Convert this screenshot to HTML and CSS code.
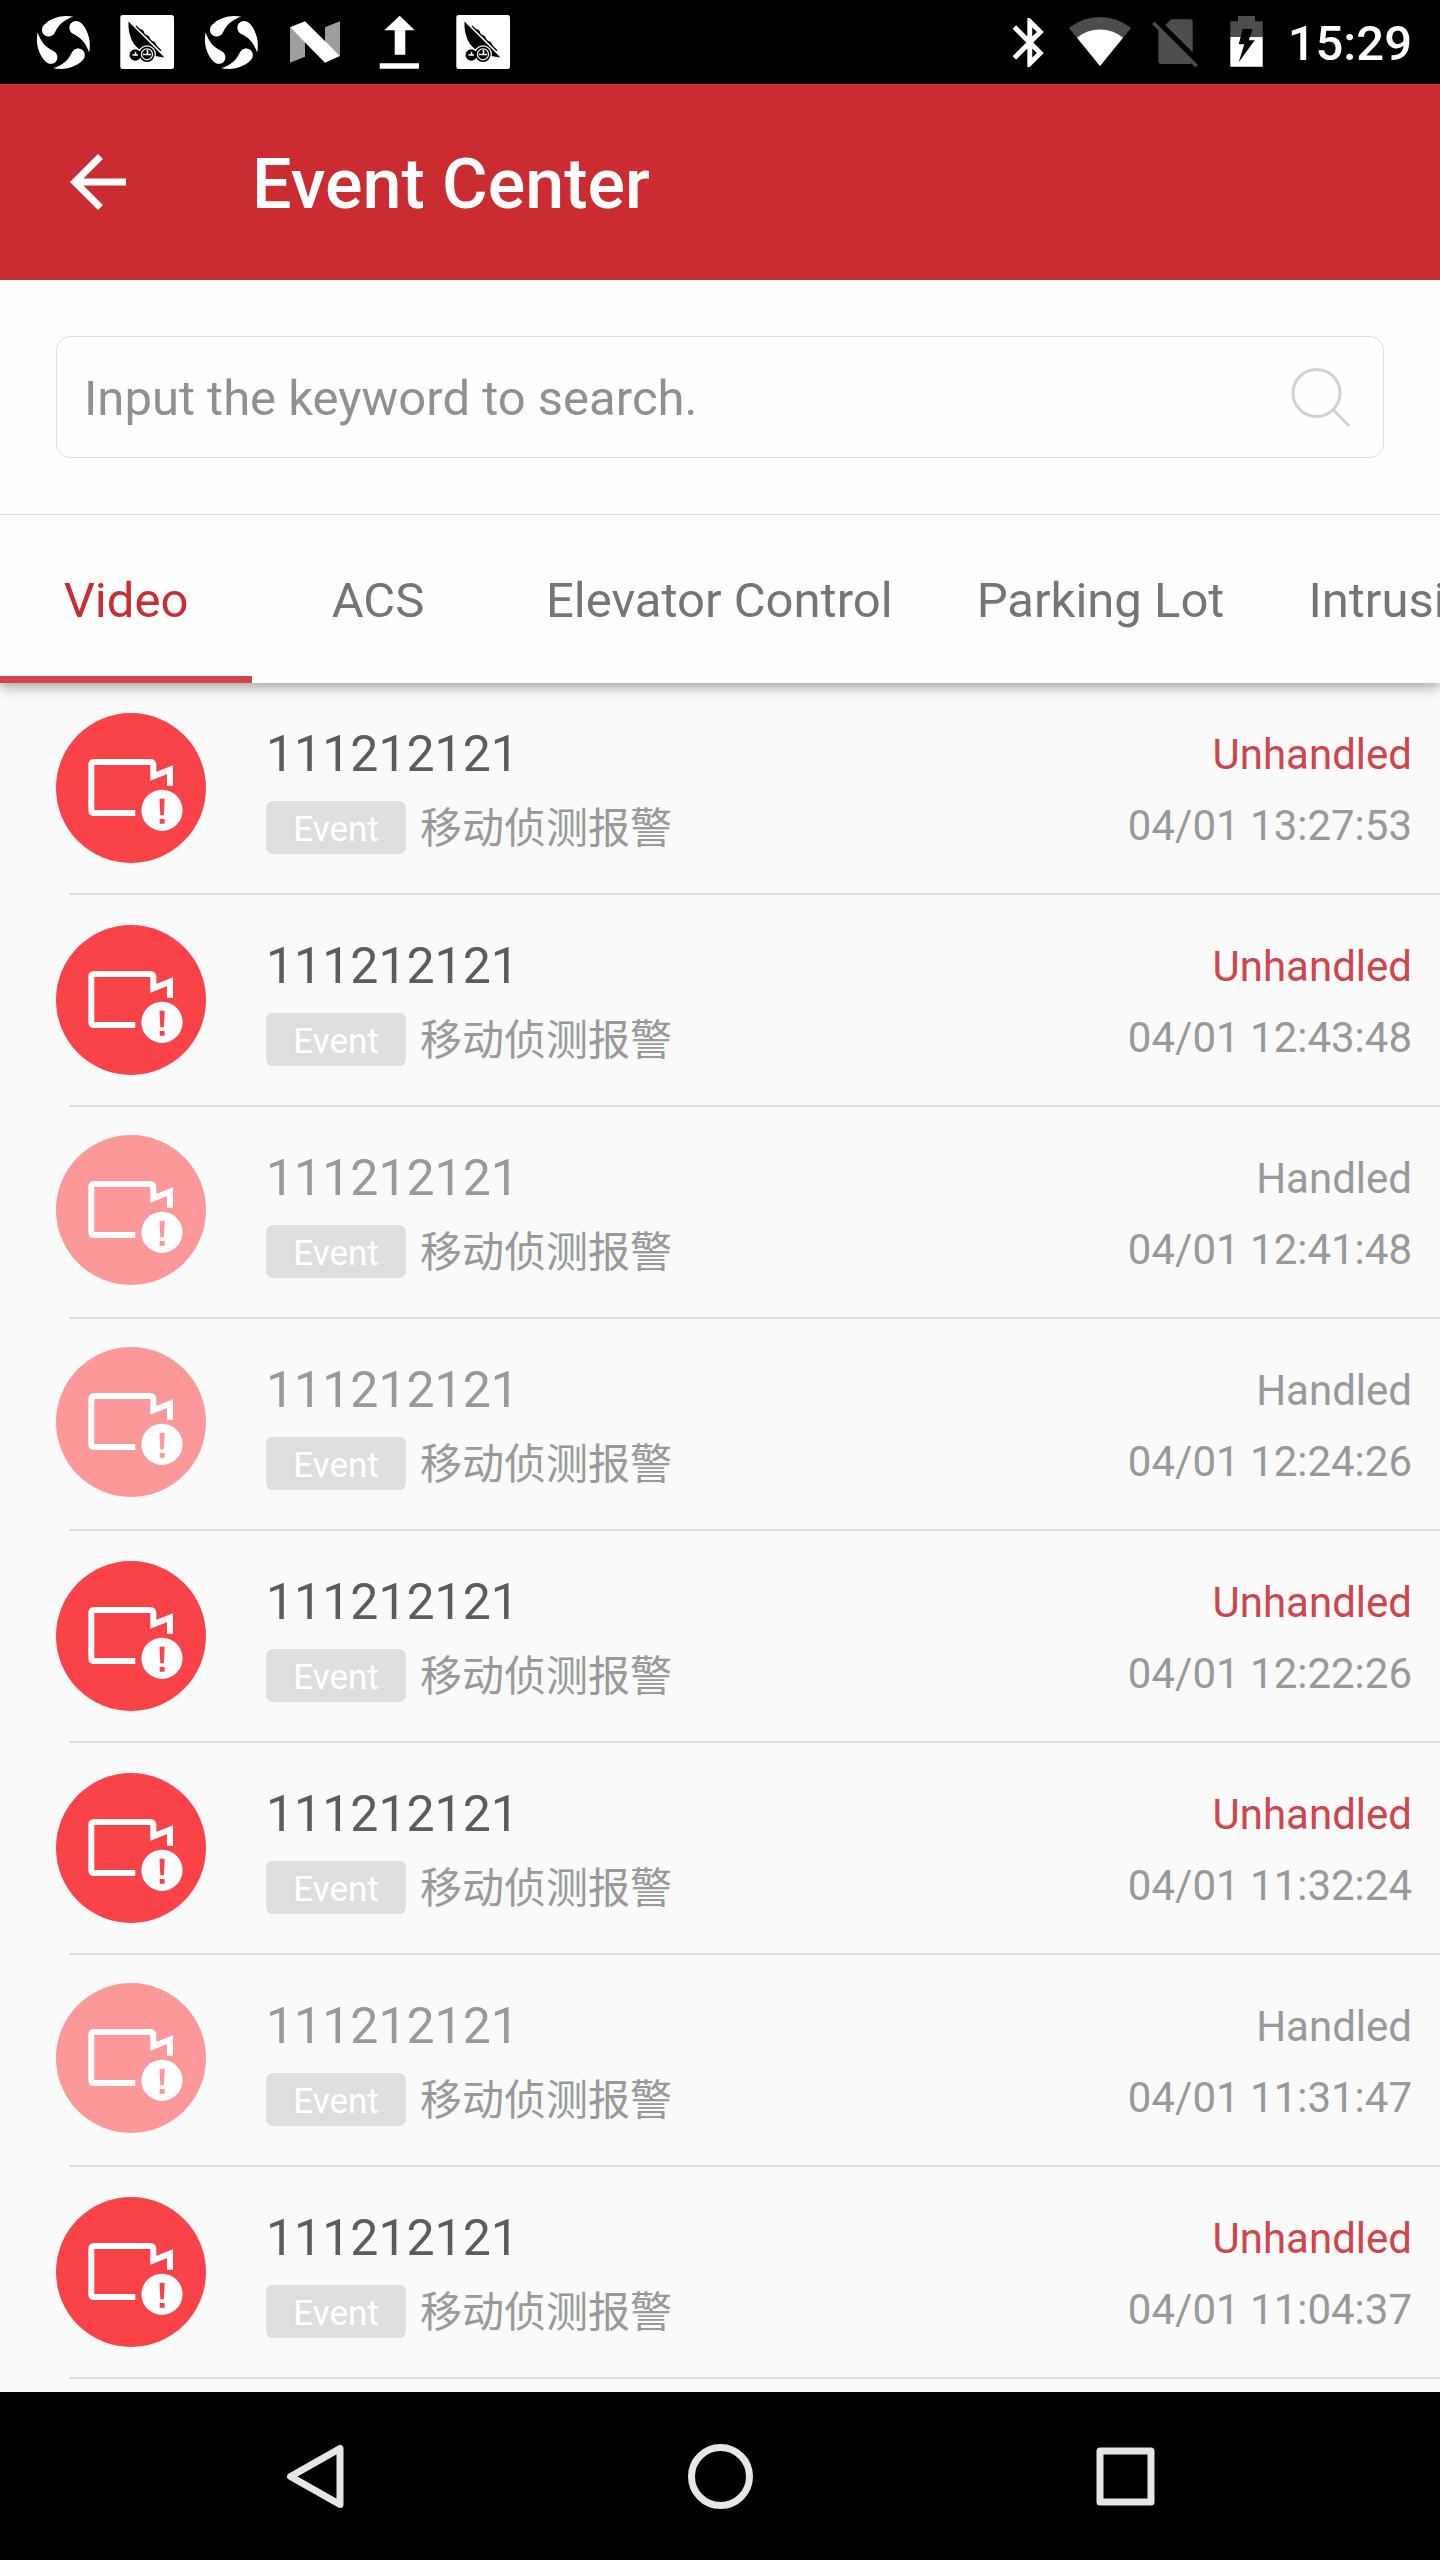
FILE: index.html
```html
<!DOCTYPE html>
<html lang="en">
<head>
<meta charset="utf-8">
<meta name="viewport" content="width=device-width, initial-scale=1">
<title>Event Center</title>
<link rel="stylesheet" href="styles.css">
</head>
<body>
<svg class="sprite" aria-hidden="true">
  <symbol id="swirl" viewBox="0 0 84 84">
    <g fill="#fff" transform="translate(42.4 42.4)">
      <path id="petal" d="M10-25.8C3-27.2-5-26.5-12-23C-16-21-19-18.500-20.800-15.500C-23-10-19-6-15-6C-11-6-9-8.500-8-11C-4-18-1-21.500 10-25.800Z"/>
      <use href="#petal" transform="rotate(90)"/>
      <use href="#petal" transform="rotate(180)"/>
      <use href="#petal" transform="rotate(270)"/>
    </g>
  </symbol>
  <symbol id="sail" viewBox="0 0 84 84">
    <rect x="15.300" y="15" width="53.700" height="54" rx="2.500" fill="#fff"/>
    <path d="M23.500 21.500C23 32 26 43 34 49L42 47L50 56L59.500 57.500C55 53 50 48 48 46L28 26Z"/>
    <path d="M31 26L56 50.700" stroke="#000" stroke-width="1.300"/>
    <path d="M34.500 29.500q4-1 5 4.500zM40.500 35.500q4-1 5 4.500zM46.500 41.500q4-1 5 4.500z"/>
    <circle cx="42" cy="54.300" r="9" fill="#fff"/>
    <circle cx="30.300" cy="55" r="5.800"/>
    <circle cx="42" cy="54.300" r="7.700"/>
    <circle cx="42" cy="54.300" r="5.500" fill="none" stroke="#fff" stroke-width="1.200"/>
    <path d="M38 54.500h8M42.500 50v4M27.500 55h5.500M30.500 52v3" stroke="#fff" stroke-width="1.600"/>
  </symbol>
  <symbol id="camera" viewBox="0 0 150 150">
    <circle cx="75" cy="75" r="75" fill="currentColor"/>
    <path d="M79.300 100H38.500Q35.300 100 35.300 97V52Q35.300 49 38.500 49H94Q97.300 49 97.300 52V63.300L114 56.700V72.700" fill="none" stroke="#fff" stroke-width="6"/>
    <circle cx="106" cy="97.300" r="20.600" fill="#fff"/>
    <path d="M103.500 85.700h5.200l-.8 16.600h-3.600zM103.700 106h5v4.700h-5z" fill="currentColor"/>
  </symbol>
</svg>

<div class="screen">
  <div class="status-bar">
    <div class="status-group">
      <svg width="84" height="84" aria-hidden="true"><use href="#swirl"/></svg>
      <svg width="84" height="84" aria-hidden="true"><use href="#sail"/></svg>
      <svg width="84" height="84" aria-hidden="true"><use href="#swirl"/></svg>
      <svg width="84" height="84" viewBox="0 0 84 84" aria-hidden="true">
        <path d="M17 27.300L32 42V56.700L17 62.700ZM52 27.300L67 21.300V56L52 42Z" fill="#9e9e9e"/>
        <path d="M17 27.300L32 21.300L67 56L52 62.700Z" fill="#fff"/>
      </svg>
      <svg width="84" height="84" viewBox="0 0 84 84" aria-hidden="true">
        <path d="M42.700 15.700L57.700 30.300H48.300V54.700H37.700V30.300H27.300ZM22.700 63.300H62V68.700H22.700Z" fill="#fff"/>
      </svg>
      <svg width="84" height="84" aria-hidden="true"><use href="#sail"/></svg>
    </div>
    <div class="status-group">
      <svg width="62" height="84" viewBox="0 0 62 84" aria-hidden="true">
        <path transform="translate(2.400 13.100) scale(2.450)" fill="#fff" d="M17.710 7.710L12 2h-1v7.590L6.410 5 5 6.410 10.590 12 5 17.590 6.410 19 11 14.410V22h1l5.710-5.710-4.300-4.290 4.300-4.290zM13 5.830l1.880 1.880L13 9.590V5.830zm1.880 10.460L13 18.170v-3.760l1.880 1.880z"/>
      </svg>
      <svg width="80" height="84" viewBox="0 0 80 84" aria-hidden="true">
        <path d="M40 66L9 28A49 49 0 0 1 71 28Z" fill="#4d4d4d"/>
        <path d="M40 66L17 37.700A36 36 0 0 1 63 37.700Z" fill="#fff"/>
      </svg>
      <svg width="72" height="84" viewBox="0 0 72 84" aria-hidden="true">
        <path fill="#4d4d4d" d="M25.300 25L31 19.300H50Q52.700 19.300 52.700 22V52.500ZM14.700 21.700L58 65L55.300 67.300L51.500 63.500Q50.500 64 49 64H21.500Q18.300 64 18.300 61V30.300L12 24Z"/>
      </svg>
      <svg width="66" height="84" viewBox="0 0 66 84" aria-hidden="true">
        <path d="M18.300 37V21.300H26V16H43V21.300H50.700V37Z" fill="#4d4d4d"/>
        <path d="M18.300 37H50.700V66.700H18.300Z" fill="#fff"/>
        <path d="M30.700 29H40.700L36.700 40.300H42.700L26.700 62.300L32.300 44.300H26.700Z"/>
      </svg>
      <time class="clock">15:29</time>
    </div>
  </div>

  <header class="app-bar">
    <button class="back" type="button" aria-label="Back">
      <svg width="84" height="84" viewBox="0 0 24 24" aria-hidden="true"><path fill="#fff" d="M20 11H7.830l5.590-5.590L12 4l-8 8 8 8 1.410-1.410L7.830 13H20v-2z"/></svg>
    </button>
    <h1 class="title">Event Center</h1>
  </header>

  <form class="search" role="search">
    <div class="search-box">
      <input class="search-input" type="text" aria-label="Search events" placeholder="Input the keyword to search.">
      <button class="search-button" type="button" aria-label="Search">
        <svg width="60" height="60" viewBox="0 0 60 60" fill="none" stroke="#d2d2d2" stroke-width="3" aria-hidden="true"><circle cx="25.500" cy="26" r="23.500"/><path d="M42 42.500L58 59"/></svg>
      </button>
    </div>
  </form>

  <nav class="tabs" aria-label="Event types">
    <a class="tab tab-active" href="#video" aria-current="page">Video</a>
    <a class="tab" href="#acs">ACS</a>
    <a class="tab" href="#elevator">Elevator Control</a>
    <a class="tab" href="#parking">Parking Lot</a>
    <a class="tab" href="#intrusion">Intrusion</a>
  </nav>

  <main class="content">
    <ul class="events">
      <li class="event">
        <div class="event-row">
          <svg class="event-icon" aria-hidden="true"><use href="#camera"/></svg>
          <div class="event-info"><span class="event-name">111212121</span><div class="event-detail"><span class="badge">Event</span><span class="event-type" lang="zh">移动侦测报警</span></div></div>
          <div class="event-meta"><span class="event-status">Unhandled</span><time>04/01 13:27:53</time></div>
        </div>
      </li>
      <li class="event">
        <div class="event-row">
          <svg class="event-icon" aria-hidden="true"><use href="#camera"/></svg>
          <div class="event-info"><span class="event-name">111212121</span><div class="event-detail"><span class="badge">Event</span><span class="event-type" lang="zh">移动侦测报警</span></div></div>
          <div class="event-meta"><span class="event-status">Unhandled</span><time>04/01 12:43:48</time></div>
        </div>
      </li>
      <li class="event handled">
        <div class="event-row">
          <svg class="event-icon" aria-hidden="true"><use href="#camera"/></svg>
          <div class="event-info"><span class="event-name">111212121</span><div class="event-detail"><span class="badge">Event</span><span class="event-type" lang="zh">移动侦测报警</span></div></div>
          <div class="event-meta"><span class="event-status">Handled</span><time>04/01 12:41:48</time></div>
        </div>
      </li>
      <li class="event handled">
        <div class="event-row">
          <svg class="event-icon" aria-hidden="true"><use href="#camera"/></svg>
          <div class="event-info"><span class="event-name">111212121</span><div class="event-detail"><span class="badge">Event</span><span class="event-type" lang="zh">移动侦测报警</span></div></div>
          <div class="event-meta"><span class="event-status">Handled</span><time>04/01 12:24:26</time></div>
        </div>
      </li>
      <li class="event">
        <div class="event-row">
          <svg class="event-icon" aria-hidden="true"><use href="#camera"/></svg>
          <div class="event-info"><span class="event-name">111212121</span><div class="event-detail"><span class="badge">Event</span><span class="event-type" lang="zh">移动侦测报警</span></div></div>
          <div class="event-meta"><span class="event-status">Unhandled</span><time>04/01 12:22:26</time></div>
        </div>
      </li>
      <li class="event">
        <div class="event-row">
          <svg class="event-icon" aria-hidden="true"><use href="#camera"/></svg>
          <div class="event-info"><span class="event-name">111212121</span><div class="event-detail"><span class="badge">Event</span><span class="event-type" lang="zh">移动侦测报警</span></div></div>
          <div class="event-meta"><span class="event-status">Unhandled</span><time>04/01 11:32:24</time></div>
        </div>
      </li>
      <li class="event handled">
        <div class="event-row">
          <svg class="event-icon" aria-hidden="true"><use href="#camera"/></svg>
          <div class="event-info"><span class="event-name">111212121</span><div class="event-detail"><span class="badge">Event</span><span class="event-type" lang="zh">移动侦测报警</span></div></div>
          <div class="event-meta"><span class="event-status">Handled</span><time>04/01 11:31:47</time></div>
        </div>
      </li>
      <li class="event">
        <div class="event-row">
          <svg class="event-icon" aria-hidden="true"><use href="#camera"/></svg>
          <div class="event-info"><span class="event-name">111212121</span><div class="event-detail"><span class="badge">Event</span><span class="event-type" lang="zh">移动侦测报警</span></div></div>
          <div class="event-meta"><span class="event-status">Unhandled</span><time>04/01 11:04:37</time></div>
        </div>
      </li>
    </ul>
  </main>

  <div class="nav-bar">
    <button class="nav-button" type="button" aria-label="Back">
      <svg width="84" height="84" viewBox="0 0 84 84" aria-hidden="true"><path d="M67 14.500V70.500L17.500 42.500Z"/></svg>
    </button>
    <button class="nav-button" type="button" aria-label="Home">
      <svg width="84" height="84" viewBox="0 0 84 84" aria-hidden="true"><circle cx="42.500" cy="42.500" r="29"/></svg>
    </button>
    <button class="nav-button" type="button" aria-label="Recent apps">
      <svg width="84" height="84" viewBox="0 0 84 84" aria-hidden="true"><rect x="17" y="17" width="51" height="51"/></svg>
    </button>
  </div>
</div>
</body>
</html>
```
FILE: styles.css
```css
* {
  box-sizing: border-box;
}

body {
  margin: 0;
  font-family: Roboto, "Noto Sans CJK SC", sans-serif;
  background: #fafafa;
}

button {
  padding: 0;
  border: 0;
  background: none;
}

svg {
  display: block;
  flex: none;
}

.sprite {
  position: absolute;
  width: 0;
  height: 0;
}

.screen {
  display: flex;
  flex-direction: column;
  min-height: 100vh;
}

.status-bar {
  display: flex;
  justify-content: space-between;
  padding: 0 28px 0 21px;
  background: #000;
  color: #fff;
}

.status-group {
  display: flex;
  align-items: center;
}

.clock {
  padding: 4px 0 0 10px;
  font-size: 49px;
  font-weight: 500;
  line-height: 80px;
}

.app-bar {
  display: flex;
  align-items: center;
  gap: 112px;
  padding: 56px;
  background: #cb2c31;
}

.title {
  margin: 0;
  padding-top: 4px;
  color: #fff;
  font-size: 70px;
  font-weight: 500;
  line-height: 80px;
}

.search {
  position: relative;
  z-index: 2;
  padding: 56px;
  border-bottom: 1px solid #dedede;
  background: #fefefe;
}

.search-box {
  display: flex;
  align-items: center;
  padding: 0 32px 0 27px;
  border: 1px solid #dedede;
  border-radius: 14px;
}

.search-input {
  flex: 1;
  min-width: 0;
  height: 120px;
  padding: 3px 0 0;
  border: 0;
  outline: 0;
  background: none;
  font: 49px Roboto, sans-serif;
  color: #5c5c5c;
}

.search-input::placeholder {
  color: #909090;
  opacity: 1;
}

.tabs {
  position: relative;
  z-index: 1;
  display: flex;
  overflow-x: clip;
  background: #fefefe;
  box-shadow: 0 4px 12px rgba(0, 0, 0, 0.35);
}

.tab {
  flex: none;
  min-width: 252px;
  padding: 56px 42px 45px;
  border-bottom: 7px solid transparent;
  color: #757575;
  font-size: 49px;
  line-height: 60px;
  text-align: center;
  text-decoration: none;
}

.tab-active {
  border-bottom-color: #d1444a;
  color: #cb2c31;
}

.content {
  flex: 1;
}

.events {
  margin: 0;
  padding: 0;
  list-style: none;
}

.event::after {
  content: "";
  display: block;
  height: 2px;
  margin-left: 70px;
  background: #dedede;
}

.event-row {
  display: flex;
  align-items: flex-start;
  gap: 60px;
  padding: 30px 28px 30px 56px;
}

.event-icon {
  width: 150px;
  height: 150px;
  color: #f94348;
}

.handled .event-icon {
  margin: -2px 0 2px;
  color: #fc979a;
}

.event-info {
  flex: 1;
  padding-top: 11px;
}

.event-name {
  display: block;
  margin-bottom: 17px;
  color: #5c5c5c;
  font-size: 50px;
  line-height: 60px;
}

.handled .event-name {
  color: #999;
}

.event-detail {
  display: flex;
  align-items: center;
  gap: 14px;
  height: 53px;
  color: #999;
  font-size: 42px;
  line-height: 50px;
}

.event-type {
  padding-top: 3px;
}

.badge {
  width: 140px;
  padding: 4px 0 0;
  border-radius: 7px;
  background: #dedede;
  color: #fff;
  font-size: 35px;
  line-height: 49px;
  text-align: center;
}

.event-meta {
  display: flex;
  flex-direction: column;
  gap: 21px;
  padding-top: 17px;
  color: #999;
  font-size: 42px;
  line-height: 50px;
  text-align: right;
}

.event-status {
  color: #d1444a;
}

.handled .event-status {
  color: #999;
}

.nav-bar {
  display: flex;
  justify-content: center;
  gap: 125px;
  background: #000;
}

.nav-button {
  display: flex;
  justify-content: center;
  align-items: center;
  width: 280px;
  height: 168px;
}

.nav-button svg {
  fill: none;
  stroke: #e6e6e6;
  stroke-width: 7;
  stroke-linejoin: round;
}
```
